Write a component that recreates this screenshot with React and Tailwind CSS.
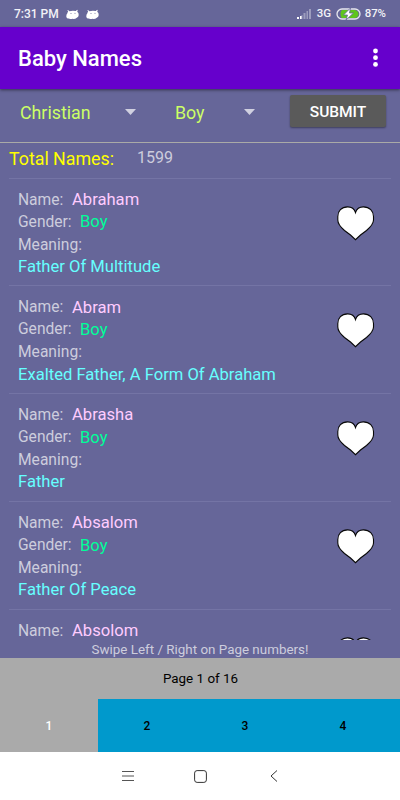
const names = [
  { name: 'Abraham', meaning: 'Father Of Multitude' },
  { name: 'Abram', meaning: 'Exalted Father, A Form Of Abraham' },
  { name: 'Abrasha', meaning: 'Father' },
  { name: 'Absalom', meaning: 'Father Of Peace' },
];

function Android() {
  return (
    <svg className="h-[11px] w-[13px]" viewBox="0 0 13 11" fill="#fff">
      <path d="M2 1 3.400 2.300Q6.500 1.200 9.800 2.100L11.200 .8 11.700 1.200 11.200 2.700Q12.800 3.700 12.700 6 12.600 8.200 10.800 8.700 9 10.200 6.500 9.800 4.500 10.500 3 9.500 .3 9.500 .3 7.200 .3 5 1.400 4.200 1.500 3.300 2.200 2.800L1.400 1.300Z" />
      <circle cx="5" cy="4.400" r=".5" fill="#666699" />
      <circle cx="9" cy="4.200" r=".5" fill="#666699" />
    </svg>
  );
}

function Heart() {
  return (
    <svg className="h-[35px] w-[38px]" viewBox="0 0 38 35">
      <path
        d="M18.500 6.500C17.500 3 14 .9 10.500 .9 4.500 .9 .8 5 .8 10.500V14C.8 18.500 4 21.500 7.500 24.500L13.500 29 18.500 33.700 23.500 29 29.500 24.500C33 21.500 36.500 18.500 36.500 14V10.500C36.500 5 32.500 .9 26.500 .9 23 .9 19.500 3 18.500 6.500Z"
        fill="#fff"
        stroke="#080808"
        strokeWidth="1.1"
      />
    </svg>
  );
}

function Caret() {
  return (
    <svg className="-ml-[0.5px] mb-[2px] h-[6px] w-[11px]" viewBox="0 0 11 6">
      <path d="M0 0H11L5.500 6Z" fill="#d0d0e0" />
    </svg>
  );
}

function StatusBar() {
  return (
    <div className="flex h-[27px] shrink-0 items-center pl-[14px] pr-[14px] pt-px text-[12px] font-medium text-[#f2f2f7]">
      <span className="w-[52px] whitespace-nowrap">7:31 PM</span>
      <span className="flex gap-[7px]">
        <Android />
        <Android />
      </span>
      <span className="ml-auto flex items-center">
        <svg className="mr-[6px] h-[10px] w-[14px]" viewBox="0 0 14 10">
          <path d="M0 8h2v2H0zM3 7h2v3H3z" fill="#fff" />
          <path d="M4.500 6h1v4h-1zM6.500 4h2v6h-2zM9.500 2h1.500v8H9.500zM12 0h2v10h-2z" fill="#9c9cbd" />
        </svg>
        <span className="w-[19px] text-[11.500px]">3G</span>
        <svg className="mr-[4px] h-[12px] w-[25px]" viewBox="0 0 25 12">
          <rect x="1" y="1" width="23" height="10" rx="5" fill="none" stroke="#e8e8ee" strokeWidth="1.3" />
          <path d="M6 2H19Q22.500 3 22.500 6T19 10H6Q4.500 9 4.500 6T6 2Z" fill="#5fc51c" />
          <path d="M14.500 0 7.500 7H11.500L10 12 17.500 5H13.500Z" fill="#fff" stroke="#666699" strokeWidth=".8" />
        </svg>
        <span className="whitespace-nowrap text-[11.400px]">87%</span>
      </span>
    </div>
  );
}

function NameLine({ name }) {
  return (
    <div className="flex h-[23px] items-center">
      <span className="w-[54px] pt-px">Name:</span>
      <span className="pt-px text-[16.600px] text-[#ffccff]">{name}</span>
    </div>
  );
}

function NameRow({ item }) {
  return (
    <div className="mx-[9px] flex h-[107.8px] shrink-0 border-t border-[#7474a5] pl-[9px] pr-[16px] text-[15.600px] text-[#cdcddd]">
      <div className="flex-1 whitespace-nowrap pt-[9.800px]">
        <NameLine name={item.name} />
        <div className="flex h-[22px] items-center">
          <span className="w-[62px]">Gender:</span>
          <span className="pt-px text-[16.600px] text-[#00ff99]">Boy</span>
        </div>
        <div className="flex h-[23px] items-center pt-px">Meaning:</div>
        <div className="flex h-[22px] items-center text-[16.600px] text-[#66ffff]">{item.meaning}</div>
      </div>
      <div className="pt-[27px]">
        <Heart />
      </div>
    </div>
  );
}

export default function App() {
  return (
    <div className="flex h-[800px] w-[400px] flex-col overflow-hidden bg-[#666699] font-['Roboto',sans-serif]">
      <StatusBar />
      <header className="z-10 flex h-[62px] shrink-0 items-center justify-between bg-[#6600cc] pl-[18px] pr-[22px] shadow-[0_1px_3px_rgba(0,0,0,0.5)]">
        <h1 className="pt-px text-[22px] font-medium text-white">Baby Names</h1>
        <svg className="h-[20px] w-[5px]" viewBox="0 0 5 20" fill="#fff">
          <circle cx="2.500" cy="3" r="2.400" />
          <circle cx="2.500" cy="9.700" r="2.400" />
          <circle cx="2.500" cy="16.400" r="2.400" />
        </svg>
      </header>
      <div className="flex h-[54px] shrink-0 border-b border-[#aaaaa7] pl-[20px] pr-[14px] text-[17.800px] text-[#ccff66]">
        <div className="flex h-[48px] w-[155px] items-center">
          <span className="w-[105px]">Christian</span>
          <Caret />
        </div>
        <div className="flex h-[48px] items-center">
          <span className="w-[69px]">Boy</span>
          <Caret />
        </div>
        <button className="ml-auto mt-[6px] h-[32px] w-[96px] rounded-[2px] bg-[#5a5a5a] pt-[3px] text-[15.500px] font-medium text-white shadow-[0_1px_2px_rgba(0,0,0,0.4)]">
          SUBMIT
        </button>
      </div>
      <div className="flex h-[34.500px] shrink-0 pl-[9px]">
        <span className="w-[128px] pt-[3px] text-[17.800px] text-[#ffff00]">Total Names:</span>
        <span className="pt-[3px] text-[16px] text-[#cdcddd]">1599</span>
      </div>
      <main className="flex h-[462.500px] shrink-0 flex-col overflow-hidden">
        {names.map((item) => (
          <NameRow key={item.name} item={item} />
        ))}
        <div className="mx-[9px] flex flex-1 justify-between border-t border-[#7474a5] pl-[9px] pr-[16px] text-[15.600px] text-[#cdcddd]">
          <div className="h-[30px] pt-[9.800px]">
            <NameLine name="Absolom" />
          </div>
          <div className="h-[30px] overflow-hidden pt-[27px]">
            <Heart />
          </div>
        </div>
      </main>
      <div className="flex h-[18px] shrink-0 items-center justify-center whitespace-nowrap pt-[2px] text-[13.400px] leading-[16px] text-[#cdcddd]">
        Swipe Left / Right on Page numbers!
      </div>
      <div className="flex h-[41px] shrink-0 items-center justify-center bg-[#aaaaaa] pl-px pt-[2px] text-[13.400px] text-black">
        Page 1 of 16
      </div>
      <div className="flex h-[53px] shrink-0 text-[12px] font-medium text-black">
        <div className="flex w-[98px] items-center justify-center bg-[#aaaaaa] text-white">1</div>
        <div className="flex w-[98px] items-center justify-center bg-[#0099cc]">2</div>
        <div className="flex w-[98px] items-center justify-center bg-[#0099cc]">3</div>
        <div className="flex w-[98px] items-center justify-center bg-[#0099cc]">4</div>
        <div className="flex-1 bg-[#0099cc]" />
      </div>
      <nav className="flex h-[48px] shrink-0 items-center bg-white pl-[122px]">
        <svg className="h-[12px] w-[12px]" viewBox="0 0 12 12">
          <path d="M0 1.500H12M0 6H12M0 10.500H12" stroke="#555" strokeWidth="1" />
        </svg>
        <svg className="ml-[60px] h-[13px] w-[13px]" viewBox="0 0 13 13">
          <rect x=".6" y=".6" width="11.800" height="11.800" rx="2.500" fill="none" stroke="#333" strokeWidth="1" />
        </svg>
        <svg className="ml-[63px] h-[12px] w-[8px]" viewBox="0 0 8 12">
          <path d="M7 .5 1 6 7 11.500" fill="none" stroke="#333" strokeWidth="1" />
        </svg>
      </nav>
    </div>
  );
}
